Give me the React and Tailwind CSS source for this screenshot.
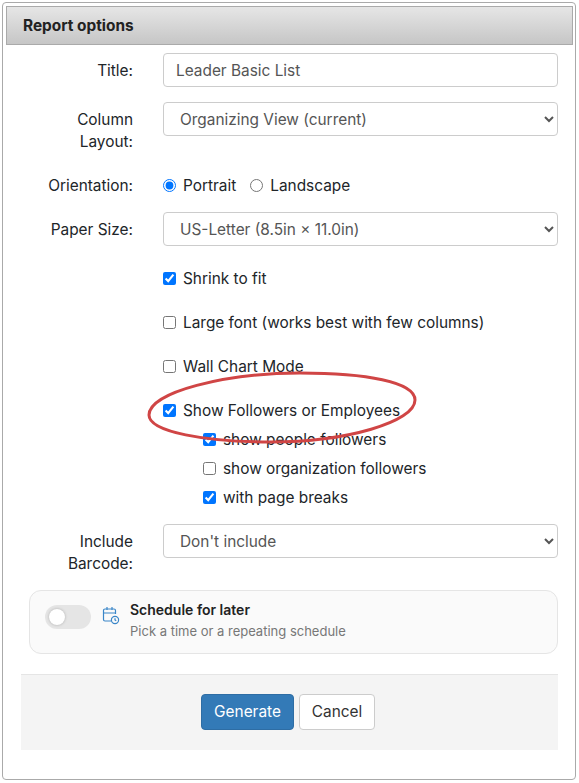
import { useState } from 'react'

const FIELD =
  'h-[34px] w-full rounded-[4px] border border-[#ccc] bg-white text-[15.4px] text-[#555] outline-none'

function Row({ label, children, className = '' }) {
  return (
    <div className={`flex ${className}`}>
      <label className="w-[112px] shrink-0 pt-[7px] text-right leading-[22px] text-[#212529]">{label}</label>
      <div className="ml-[30px] min-w-0 flex-1">{children}</div>
    </div>
  )
}

function Check({ label, checked, className = '' }) {
  return (
    <label className={`flex items-center text-[#212529] ${className}`}>
      <input type="checkbox" defaultChecked={checked} className="m-0 mb-[2px] h-[13px] w-[13px]" />
      <span className="ml-[7px] leading-[22px]">{label}</span>
    </label>
  )
}

function Radio({ label, checked }) {
  return (
    <label className="flex items-center">
      <input type="radio" name="orientation" defaultChecked={checked} className="m-0 mb-[2px] h-[13px] w-[13px]" />
      <span className="ml-[7px] leading-[22px] text-[#212529]">{label}</span>
    </label>
  )
}

export default function App() {
  const [later, setLater] = useState(false)

  return (
    <div className="h-[783px] w-[579px] bg-white p-[2px] font-['Inter',sans-serif] text-[15.4px]">
      <div className="relative h-[778px] w-[574px] rounded-[4px] border border-[#aaa] p-[3px]">
        <div className="flex h-[39px] w-[567px] items-center border border-[#aaa] bg-gradient-to-b from-[#e6e6e6] to-[#c6c6c6] pl-[16px] text-[15.4px] leading-none font-bold text-[#222]">
          Report options
        </div>

        <div className="mt-[8px] ml-[15px] w-[537px]">
          <Row label="Title:" className="mb-[15px]">
            <input className={`${FIELD} px-[12px]`} defaultValue="Leader Basic List" />
          </Row>

          <Row label={<>Column<br />Layout:</>} className="mb-[15px] h-[51px]">
            <select className={`${FIELD} px-[12px]`} defaultValue="org">
              <option value="org">Organizing View (current)</option>
            </select>
          </Row>

          <Row label="Orientation:" className="mb-[15px] h-[29px]">
            <div className="flex h-[36px] items-center gap-[14px]">
              <Radio label="Portrait" checked />
              <Radio label="Landscape" />
            </div>
          </Row>

          <Row label="Paper Size:" className="mb-[22px]">
            <select className={`${FIELD} px-[12px]`} defaultValue="letter">
              <option value="letter">US-Letter (8.5in × 11.0in)</option>
            </select>
          </Row>

          <div className="ml-[142px]">
            <Check label="Shrink to fit" checked className="mb-[22px]" />
            <Check label="Large font (works best with few columns)" className="mb-[22px]" />
            <Check label="Wall Chart Mode" className="mb-[22px]" />
            <Check label="Show Followers or Employees" checked className="mb-[7px]" />
            <div className="ml-[40px] flex flex-col gap-[7px]">
              <Check label="show people followers" checked />
              <Check label="show organization followers" />
              <Check label="with page breaks" checked />
            </div>
          </div>

          <Row label={<>Include<br />Barcode:</>} className="mt-[15px] mb-[15px] h-[51px]">
            <select className={`${FIELD} px-[12px]`} defaultValue="none">
              <option value="none">Don't include</option>
            </select>
          </Row>

          <div className="ml-[8px] flex h-[64px] items-start rounded-[12px] border border-[#e5e5e5] bg-[#fafafa] pt-[9px] pl-[15px]">
            <button
              type="button"
              onClick={() => setLater(!later)}
              className="mt-[5px] flex h-[24px] w-[46px] items-center rounded-full bg-[#e5e5e5] px-[4px]"
            >
              <span className="h-[16px] w-[16px] rounded-full bg-white shadow-[0_0_3px_rgba(0,0,0,0.25)]" />
            </button>
            <svg className="mt-[5px] ml-[11px]" width="18" height="20" viewBox="0 0 18 20" fill="none" stroke="#3a86c8" strokeWidth="1.2">
              <path d="M9 16H3a1.5 1.5 0 0 1-1.5-1.5v-9A1.5 1.5 0 0 1 3 4h9a1.5 1.5 0 0 1 1.5 1.5V9" />
              <path d="M1.5 8h12M5 2v3M10 2v3" />
              <circle cx="13" cy="15" r="3.6" />
              <path d="M13 13.2V15l1.2.8" />
            </svg>
            <div className="ml-[10px]">
              <div className="text-[14px] leading-[20px] font-semibold text-[#222]">Schedule for later</div>
              <div className="mt-[1px] text-[13px] leading-[20px] text-[#777]">Pick a time or a repeating schedule</div>
            </div>
          </div>

          <div className="mt-[20px] flex h-[76px] items-center justify-center gap-[5px] border-t border-[#e5e5e5] bg-[#f4f4f4] pr-[4px] pb-[2px]">
            <button type="button" className="h-[36px] w-[93px] rounded-[4px] border border-[#2e6da4] bg-[#337ab7] pl-[1px] text-white">
              Generate
            </button>
            <button type="button" className="h-[36px] w-[76px] rounded-[4px] border border-[#ccc] bg-white pl-[1px] text-[#333]">
              Cancel
            </button>
          </div>
        </div>

        {/* hand-drawn annotation over the followers option */}
        <svg className="pointer-events-none absolute top-[367px] left-[143px]" width="272" height="76" viewBox="0 0 272 76" fill="none">
          <path
            d="M3 45C3 22 80 3 154 3C220 3 269 12 269 30C269 52 200 72 125 72C60 72 3 62 3 45Z"
            stroke="#d04545"
            strokeWidth="3"
          />
        </svg>
      </div>
    </div>
  )
}
